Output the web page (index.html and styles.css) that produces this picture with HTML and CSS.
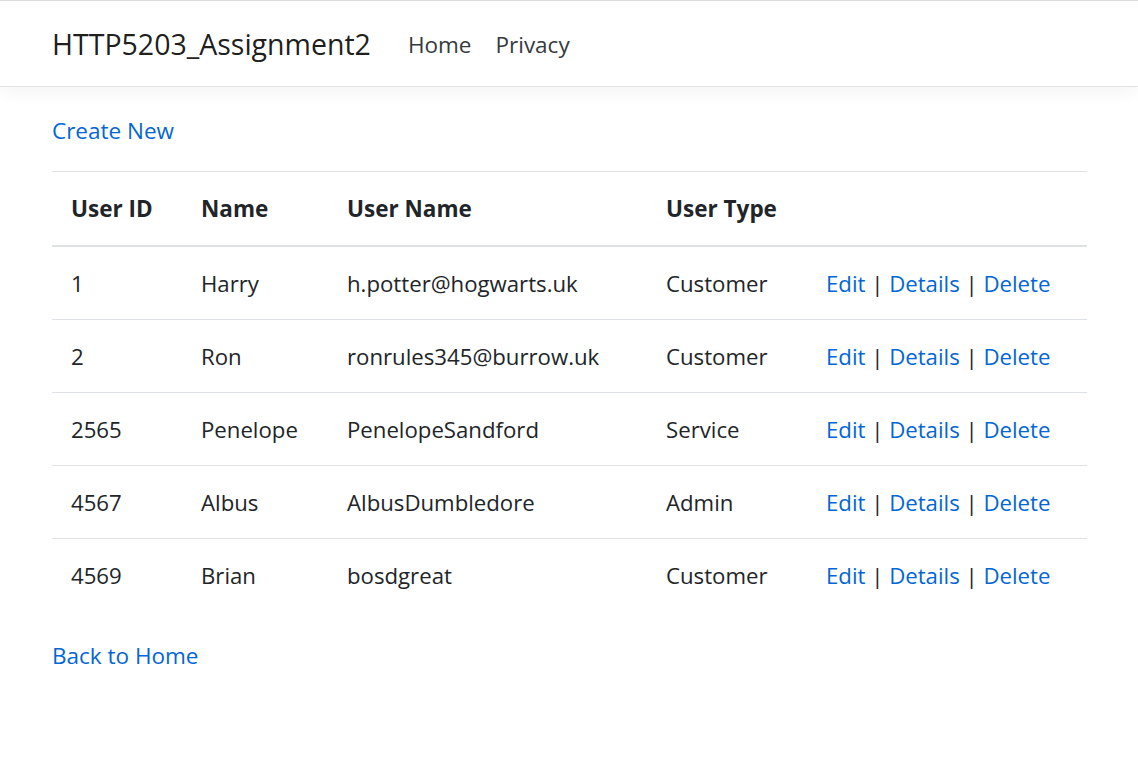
FILE: index.html
```html
<!DOCTYPE html>
<html lang="en">
<head>
<meta charset="utf-8">
<title>Users - HTTP5203_Assignment2</title>
<link rel="stylesheet" href="styles.css">
</head>
<body>
<header class="navbar">
  <div class="container nav-inner">
    <a class="brand" href="#">HTTP5203_Assignment2</a>
    <nav class="nav-links">
      <a class="nav-link" href="#">Home</a>
      <a class="nav-link" href="#">Privacy</a>
    </nav>
  </div>
</header>
<main class="container main">
  <p class="para"><a class="link" href="#">Create New</a></p>
  <table class="table">
    <colgroup>
      <col class="c1"><col class="c2"><col class="c3"><col class="c4"><col class="c5">
    </colgroup>
    <thead>
      <tr><th>User ID</th><th>Name</th><th>User Name</th><th>User Type</th><th></th></tr>
    </thead>
    <tbody>
      <tr><td>1</td><td>Harry</td><td>h.potter@hogwarts.uk</td><td>Customer</td><td><a class="link" href="#">Edit</a> | <a class="link" href="#">Details</a> | <a class="link" href="#">Delete</a></td></tr>
      <tr><td>2</td><td>Ron</td><td>ronrules345@burrow.uk</td><td>Customer</td><td><a class="link" href="#">Edit</a> | <a class="link" href="#">Details</a> | <a class="link" href="#">Delete</a></td></tr>
      <tr><td>2565</td><td>Penelope</td><td>PenelopeSandford</td><td>Service</td><td><a class="link" href="#">Edit</a> | <a class="link" href="#">Details</a> | <a class="link" href="#">Delete</a></td></tr>
      <tr><td>4567</td><td>Albus</td><td>AlbusDumbledore</td><td>Admin</td><td><a class="link" href="#">Edit</a> | <a class="link" href="#">Details</a> | <a class="link" href="#">Delete</a></td></tr>
      <tr><td>4569</td><td>Brian</td><td>bosdgreat</td><td>Customer</td><td><a class="link" href="#">Edit</a> | <a class="link" href="#">Details</a> | <a class="link" href="#">Delete</a></td></tr>
    </tbody>
  </table>
  <p class="para back"><a class="link" href="#">Back to Home</a></p>
</main>
</body>
</html>
```
FILE: styles.css
```css
* { box-sizing: border-box; }
html, body { margin: 0; padding: 0; }
body {
  font-family: "Open Sans", "Noto Sans", "Liberation Sans", sans-serif;
  font-size: 22.5px;
  line-height: 1.5;
  color: #212529;
  background: #fff;
  border-top: 1px solid #dcdcdc;
}
.container { padding: 0 51px 0 52px; }
.navbar {
  height: 86px;
  border-bottom: 1px solid #e3e3e3;
  box-shadow: 0 4px 18px rgba(0,0,0,0.05);
  background: #fff;
}
.nav-inner {
  display: flex;
  align-items: center;
  height: 100%;
  padding-top: 2px;
  gap: 37px;
}
.brand {
  color: rgba(0,0,0,0.9);
  text-decoration: none;
  font-size: 28.5px;
}
.nav-links { display: flex; gap: 24px; }
.nav-link {
  color: #343a40;
  text-decoration: none;
  font-size: 22.5px;
}
.main { padding-top: 27px; }
.para { margin: 0 0 23px; }
.link { color: #0366d6; text-decoration: none; }
.table {
  width: 100%;
  border-collapse: collapse;
  margin-bottom: 28px;
  line-height: 34px;
}
.c1 { width: 130px; }
.c2 { width: 146px; }
.c3 { width: 319px; }
.c4 { width: 160px; }
.table th, .table td {
  padding: 20px 19px 18px;
  text-align: left;
  vertical-align: top;
  border-top: 1px solid #dee2e6;
}
.table td { font-size: 22.2px; }
.table th { font-weight: 700; padding-bottom: 19px; border-bottom: 2px solid #dee2e6; }
.back { margin-top: 0; }
```
